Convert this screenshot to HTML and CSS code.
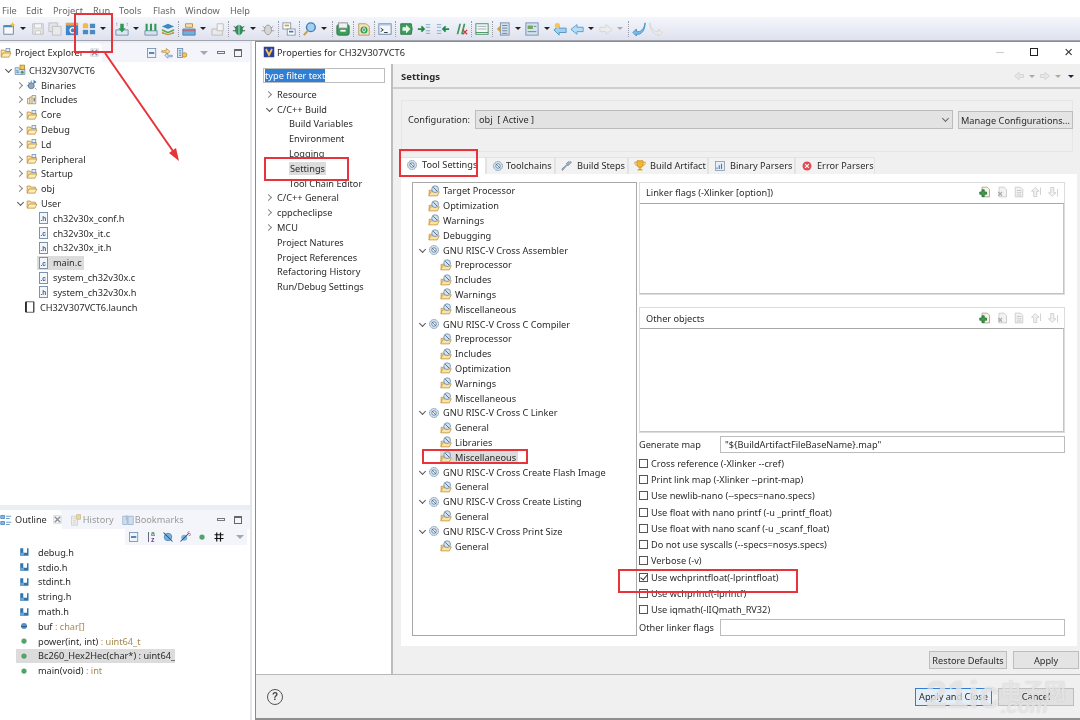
FILE: index.html
```html
<!DOCTYPE html>
<html lang="en">
<head>
    <meta charset="UTF-8">
    <title>Properties for CH32V307VCT6</title>
    <link rel="stylesheet" href="styles.css">
</head>
<body>

<svg class="defs" width="0" height="0">
    <symbol id="i-srcfolder" viewBox="0 0 16 16"><path d="M1.5 13V4h4l1 1.5h7V8" fill="#f6dfa0" stroke="#b98a35"/><path d="M1.5 13.5 4 8h10.5L12 13.5z" fill="#fdeeb8" stroke="#b98a35"/><rect x="8" y="2" width="5" height="4" fill="#e8eef5" stroke="#6d8db0"/></symbol>
    <symbol id="i-folder" viewBox="0 0 16 16"><path d="M1.5 13V4h4l1 1.5h6V8" fill="#f6dfa0" stroke="#b98a35"/><path d="M1.5 13.5 4 8h10.5L12 13.5z" fill="#fdeeb8" stroke="#b98a35"/></symbol>
    <symbol id="i-project" viewBox="0 0 16 16"><path d="M1.5 14V5h5l1 1.5h7V14z" fill="#cfe0ef" stroke="#6d8db0"/><rect x="8" y="1.5" width="6" height="6" fill="#f4c64e" stroke="#a8802a"/><path d="M3 11h4M3 9h3" stroke="#2f6fae"/><circle cx="11" cy="11" r="2" fill="#4d9a4d"/></symbol>
    <symbol id="i-binaries" viewBox="0 0 16 16"><circle cx="7" cy="9" r="4" fill="#8fa9c4" stroke="#54708e"/><path d="M7 2v3M1 9h3M3 4l2 2M12 12l2 2" stroke="#54708e"/><path d="M10 1l4 3-4 3z" fill="#3d7fb9"/></symbol>
    <symbol id="i-includes" viewBox="0 0 16 16"><path d="M2 13V6h3V4h3V2h5v11z" fill="#f6ebcf" stroke="#a78a4e"/><path d="M5 6v7M8 4v9" stroke="#a78a4e"/><rect x="10" y="5" width="2" height="5" fill="#6d8db0"/></symbol>
    <symbol id="i-launch" viewBox="0 0 16 16"><path d="M3 1h10v14H3z" fill="#fff" stroke="#333"/><path d="M2.5 1v14" stroke="#111" stroke-width="2"/><path d="M13 1v14" stroke="#444" stroke-width="1.5"/></symbol>
    <symbol id="i-toolfolder" viewBox="0 0 16 16"><path d="M1.5 14V7h4l1-1" fill="#f6dfa0" stroke="#b98a35"/><path d="M1 14.5 3.5 9H15l-2.5 5.5z" fill="#fde3a0" stroke="#c08f3a"/><circle cx="9.5" cy="5.5" r="4.5" fill="#d5e2ee" stroke="#5f84a8"/><path d="M7 3l5 5" stroke="#44668a" stroke-width="1.2"/></symbol>
    <symbol id="i-tool" viewBox="0 0 16 16"><circle cx="8" cy="8" r="6" fill="#d5e2ee" stroke="#5f84a8" stroke-dasharray="2 .6"/><circle cx="8" cy="8" r="3" fill="#f2f6fa" stroke="#54708e"/><path d="M5 5l6 6" stroke="#44668a"/></symbol>
    <symbol id="i-include" viewBox="0 0 16 16"><path d="M3 3h4v6h5V3h2v10H3z" fill="#2f74ad"/><path d="M3 9h5v4H3z" fill="#6ea3cf"/></symbol>
    <symbol id="i-fn" viewBox="0 0 16 16"><circle cx="8" cy="8" r="3.5" fill="#4fa36c"/></symbol>
    <symbol id="i-var" viewBox="0 0 16 16"><circle cx="8" cy="8" r="4" fill="#5b8fc4"/><path d="M4 8h8v1.5H4z" fill="#2c5f96"/></symbol>
    <symbol id="i-x" viewBox="0 0 10 10"><path d="M2 2l6 6M8 2 2 8" stroke="#8a8f98" stroke-width="1.6" fill="none"/><rect x="1" y="1" width="8" height="8" fill="none" stroke="#c9cdd4"/></symbol>
    <symbol id="i-outline" viewBox="0 0 16 16"><path d="M1 2h5v4H1zM1 10h5v4H1z" fill="#8fb8da" stroke="#3d7fb9"/><path d="M8 3h7M8 6h5M8 11h7M8 14h5" stroke="#3d7fb9"/></symbol>
    <symbol id="i-history" viewBox="0 0 16 16"><path d="M2 3h8v12H2z" fill="#eee" stroke="#c8c8c8"/><path d="M4 6h4M4 9h4M4 12h4" stroke="#ccc"/><rect x="9" y="1" width="5" height="6" fill="#ecd9a0" stroke="#cdb77f"/></symbol>
    <symbol id="i-bookmarks" viewBox="0 0 16 16"><path d="M1 3h6v11H1zM8 3h7v11H8z" fill="#cfdeed" stroke="#93aec8"/><path d="M5 2h3v7L6.500 7.500 5 9z" fill="#a8c0d8"/></symbol>
    <symbol id="i-collapse" viewBox="0 0 16 16"><rect x="2" y="2" width="11" height="12" fill="#eef3f9" stroke="#5f84a8"/><path d="M4 8h7" stroke="#2f5f96" stroke-width="2"/></symbol>
    <symbol id="i-sync" viewBox="0 0 16 16"><path d="M1 5h6V2l5 4-5 4V7H1z" fill="#f6dfa0" stroke="#b98a35"/><path d="M15 11H9V8l-4 3 4 4v-2h6z" fill="#dbe7f2" stroke="#6d8db0"/></symbol>
    <symbol id="i-filter" viewBox="0 0 16 16"><rect x="2" y="2" width="7" height="12" fill="#d5e4f2" stroke="#5f84a8"/><path d="M4 5h3M4 8h3M4 11h3" stroke="#2f6fae"/><circle cx="11.5" cy="10.5" r="3" fill="#f4c64e" stroke="#b98a35"/></symbol>
    <symbol id="i-hidefields" viewBox="0 0 16 16"><circle cx="8" cy="8" r="5" fill="#7db0d9" stroke="#3d7fb9"/><path d="M2 2l12 12" stroke="#24507f" stroke-width="1.4"/></symbol>
    <symbol id="i-hidestatic" viewBox="0 0 16 16"><circle cx="7" cy="9" r="4" fill="#7db0d9"/><path d="M2 14 13 3" stroke="#24507f" stroke-width="1.4"/><path d="M14 1c-3-.5-3 2.500 0 2.500s2 3-1 2.500" stroke="#c2456a" fill="none"/></symbol>
    <symbol id="i-hash" viewBox="0 0 16 16"><path d="M5 2v12M10 2v12M2 5h12M2 10h12" stroke="#111" stroke-width="1.6"/></symbol>
    <symbol id="i-back" viewBox="0 0 16 16"><path d="M2 8l6-5v3h6v4H8v3z" fill="#e6e6e6" stroke="#cfcfcf"/></symbol>
    <symbol id="i-fwd" viewBox="0 0 16 16"><path d="M14 8 8 3v3H2v4h6v3z" fill="#e6e6e6" stroke="#cfcfcf"/></symbol>
    <symbol id="i-addrow" viewBox="0 0 16 16"><path d="M4 1.5h7l3 3v10H4z" fill="#f6f3e2" stroke="#9a9a80"/><path d="M1 8h3V5h3v3h3v3H7v3H4v-3H1z" fill="#3f9c50" stroke="#246b33"/></symbol>
    <symbol id="i-delrow" viewBox="0 0 16 16"><path d="M4 1.5h7l3 3v10H4z" fill="#f2f2f2" stroke="#c4c4c4"/><path d="M3 8l5 5M8 8l-5 5" stroke="#aaa" stroke-width="1.5"/></symbol>
    <symbol id="i-editrow" viewBox="0 0 16 16"><path d="M3 1.5h7l3 3v10H3z" fill="#f2f2f2" stroke="#c4c4c4"/><path d="M5 6h6M5 9h6M5 12h6" stroke="#bbb"/></symbol>
    <symbol id="i-uprow" viewBox="0 0 16 16"><path d="M7 2 2 7h3v7h4V7h3z" fill="#f2f2f2" stroke="#c4c4c4"/><path d="M14 2v10" stroke="#c4c4c4"/></symbol>
    <symbol id="i-downrow" viewBox="0 0 16 16"><path d="M7 14 2 9h3V2h4v7h3z" fill="#f2f2f2" stroke="#c4c4c4"/><path d="M14 4v10" stroke="#c4c4c4"/></symbol>
    <symbol id="i-wrench" viewBox="0 0 16 16"><path d="M2 14 8 7l1 1 5-5-1-1-2 1-1-1-3 3 1 1-7 6z" fill="#9fb0c0" stroke="#7a8a9a"/></symbol>
    <symbol id="i-trophy" viewBox="0 0 16 16"><path d="M4 1h8v5c0 3-2 4-4 4s-4-1-4-4z" fill="#f2b632" stroke="#c68a1a"/><path d="M4 3H1c0 3 1 4 3 4M12 3h3c0 3-1 4-3 4" fill="none" stroke="#c68a1a"/><path d="M7 10h2v2h2v2H5v-2h2z" fill="#e0a020"/></symbol>
    <symbol id="i-binparser" viewBox="0 0 16 16"><rect x="2" y="2" width="12" height="12" fill="#e8eef5" stroke="#7d93ab"/><path d="M4 10v2M7 7v5M10 5v7" stroke="#3d7fb9" stroke-width="1.5"/></symbol>
    <symbol id="i-error" viewBox="0 0 16 16"><circle cx="8" cy="8" r="6" fill="#e24a55"/><path d="M5.500 5.500l5 5M10.500 5.500l-5 5" stroke="#fff" stroke-width="1.6"/></symbol>
    <symbol id="i-wch" viewBox="0 0 16 16"><path d="M1 1h14v14H1z" fill="#2b3f9c"/><path d="M4 4l4 8 4-8" stroke="#f4c64e" stroke-width="2.4" fill="none"/></symbol>
    <symbol id="t-new" viewBox="0 0 16 16"><path d="M2 4h11v10H2z" fill="#f6f8fb" stroke="#6a7c8f"/><path d="M2 4h11v2H2z" fill="#4a8ac0"/><path d="M12 0l1 2 2 1-2 1-1 2-1-2-2-1 2-1z" fill="#eec24a"/></symbol>
    <symbol id="t-save" viewBox="0 0 16 16"><path d="M2 2h12v12H2z" fill="#e3e4e6" stroke="#bcbdc0"/><path d="M4 2h8v5H4zM5 10h6v4H5z" fill="#f5f5f5" stroke="#c8c8c8"/></symbol>
    <symbol id="t-saveall" viewBox="0 0 16 16"><path d="M1 1h10v10H1z" fill="#e3e4e6" stroke="#bcbdc0"/><path d="M5 5h10v10H5z" fill="#e9e9ea" stroke="#bcbdc0"/></symbol>
    <symbol id="t-cproj" viewBox="0 0 16 16"><path d="M1 1h14v14H1z" fill="#3a86c8"/><path d="M1 1h14v3H1z" fill="#f0a040"/><path d="M11 7.500a3 3 0 1 0 0 4" stroke="#fff" stroke-width="1.5" fill="none"/></symbol>
    <symbol id="t-grid" viewBox="0 0 16 16"><rect x="1" y="2" width="6" height="5" fill="#f0a93a"/><rect x="9" y="2" width="6" height="5" fill="#4a8ac0"/><rect x="1" y="9" width="6" height="5" fill="#4a8ac0"/><rect x="9" y="9" width="6" height="5" fill="#4a8ac0"/><circle cx="4" cy="4" r="3" fill="#f4bb4a"/></symbol>
    <symbol id="t-build" viewBox="0 0 16 16"><path d="M1 9h14v6H1z" fill="#dbe7f2" stroke="#6d8db0"/><path d="M6 2h4v5h2l-4 5-4-5h2z" fill="#2f9a55"/><path d="M2 1v3M14 1v3" stroke="#777" stroke-dasharray="1 1"/></symbol>
    <symbol id="t-dots" viewBox="0 0 16 16"><path d="M1 10h14v5H1z" fill="#d5e2ee" stroke="#6d8db0"/><path d="M3 2v8M8 2v8M13 2v8" stroke="#2f9a55" stroke-width="2.4"/></symbol>
    <symbol id="t-books" viewBox="0 0 16 16"><path d="M1 5l7-3 7 3-7 3z" fill="#3a8ac0"/><path d="M1 8l7 3 7-3v2l-7 3-7-3z" fill="#5aa84f"/><path d="M1 11l7 3 7-3v2l-7 2-7-2z" fill="#c88a30"/></symbol>
    <symbol id="t-tray" viewBox="0 0 16 16"><path d="M1 8h14v7H1z" fill="#6fb0dd" stroke="#3d7fb9"/><path d="M4 6h8V2H4z" fill="#f4e2b0" stroke="#b98a35"/><path d="M1 10h14" stroke="#e05050"/></symbol>
    <symbol id="t-graybox" viewBox="0 0 16 16"><path d="M1 8h12v7H1z" fill="#e9e9e9" stroke="#b8b8b8"/><path d="M7 2h7v8H7z" fill="#f3f3f3" stroke="#bbb"/></symbol>
    <symbol id="t-bug" viewBox="0 0 16 16"><ellipse cx="8" cy="9" rx="4.5" ry="6" fill="#2f8f5a"/><path d="M8 3v12" stroke="#d8efd8"/><path d="M2 5l3 2M14 5l-3 2M1 10h3M15 10h-3" stroke="#444"/></symbol>
    <symbol id="t-graybug" viewBox="0 0 16 16"><ellipse cx="8" cy="9" rx="4" ry="5.5" fill="#d6d6d6" stroke="#999"/><path d="M2 5l3 2M14 5l-3 2M1 10h3M15 10h-3" stroke="#999"/></symbol>
    <symbol id="t-link" viewBox="0 0 16 16"><rect x="1" y="1" width="9" height="7" fill="#fff" stroke="#7d93ab"/><rect x="6" y="8" width="9" height="7" fill="#fff" stroke="#7d93ab"/><path d="M3 4h5" stroke="#e0a020" stroke-width="2"/><path d="M8 11h5" stroke="#3d7fb9" stroke-width="2"/></symbol>
    <symbol id="t-search" viewBox="0 0 16 16"><circle cx="9" cy="6" r="5" fill="#a5d0ee" stroke="#3d7fb9" stroke-width="1.6"/><path d="M5.500 10 1 15" stroke="#d0a040" stroke-width="2.4"/></symbol>
    <symbol id="t-jar" viewBox="0 0 16 16"><rect x="1" y="3" width="14" height="12" rx="2" fill="#3da05a" stroke="#247040"/><rect x="3" y="1" width="10" height="6" fill="#eef3ee" stroke="#888"/><path d="M5 10h6" stroke="#fff" stroke-width="2"/></symbol>
    <symbol id="t-file" viewBox="0 0 16 16"><path d="M2 2h8l4 3v10H2z" fill="#f5e4b4" stroke="#b09560"/><circle cx="8" cy="9" r="4" fill="#2f9a55"/><ellipse cx="8" cy="9" rx="1.5" ry="2.500" fill="none" stroke="#fff"/></symbol>
    <symbol id="t-term" viewBox="0 0 16 16"><rect x="1" y="2" width="14" height="12" fill="#f3f7fb" stroke="#5f84a8"/><path d="M1 2h14v2H1z" fill="#a9c5df"/><path d="M3 7l3 2-3 2M7 12h4" stroke="#222" fill="none"/></symbol>
    <symbol id="t-go" viewBox="0 0 16 16"><path d="M2 2h12l1 6-1 6H2z" fill="#3da05a" stroke="#247040"/><path d="M4 6h4V3l5 5-5 5v-3H4z" fill="#e9f6e9"/></symbol>
    <symbol id="t-goin" viewBox="0 0 16 16"><path d="M1 8h7M5 5l3 3-3 3" stroke="#1f8a45" stroke-width="2" fill="none"/><path d="M10 3h5M10 6h5M10 10h5M10 13h5" stroke="#7da6c8"/></symbol>
    <symbol id="t-goout" viewBox="0 0 16 16"><path d="M15 8H8M11 5 8 8l3 3" stroke="#1f8a45" stroke-width="2" fill="none"/><path d="M1 3h5M1 6h5M1 10h5M1 13h5" stroke="#7da6c8"/></symbol>
    <symbol id="t-bars" viewBox="0 0 16 16"><path d="M3 14 6 2h2L5 14zM8 14l3-12h2l-3 12z" fill="#3a9a60"/><path d="M10 9l5 5M15 9l-5 5" stroke="#d83a3a" stroke-width="1.6"/></symbol>
    <symbol id="t-window" viewBox="0 0 16 16"><rect x="1" y="2" width="14" height="12" fill="#f5f7f5" stroke="#3d8a5a"/><path d="M3 5h10M3 8h10" stroke="#9ab"/><path d="M1 12h14" stroke="#3d8a5a"/></symbol>
    <symbol id="t-list" viewBox="0 0 16 16"><rect x="5" y="1" width="10" height="14" fill="#d5e2ee" stroke="#6d8db0"/><path d="M7 4h6M7 7h6M7 10h6M7 13h6" stroke="#5f7b98"/><path d="M1 8l4-4v8z" fill="#e0a030"/></symbol>
    <symbol id="t-note" viewBox="0 0 16 16"><rect x="1" y="1" width="14" height="14" fill="#d5e2ee" stroke="#6d8db0"/><path d="M3 4h6v4H3z" fill="#6fa860"/><path d="M3 11h10M10 5h3" stroke="#5f7b98"/></symbol>
    <symbol id="t-yback" viewBox="0 0 16 16"><path d="M7 4v3h8v5H7v3L1 9z" fill="#9fd0f0" stroke="#4d8fc0"/><circle cx="5" cy="4" r="3" fill="#f4c64e"/></symbol>
    <symbol id="t-bback" viewBox="0 0 16 16"><path d="M8 3v3h7v5H8v3L1 8.5z" fill="#b9dcf4" stroke="#4d9ad0"/></symbol>
    <symbol id="t-gfwd" viewBox="0 0 16 16"><path d="M8 3v3H1v5h7v3l7-5.5z" fill="#ececec" stroke="#d5d5d5"/></symbol>
    <symbol id="t-undo" viewBox="0 0 16 16"><path d="M15 1C14 8 10 12 5 11V8l-4 4 4 4v-2c6 1 10-5 10-13z" fill="#7cbce8" stroke="#3d8fc8"/></symbol>
    <symbol id="t-redo" viewBox="0 0 16 16"><path d="M1 1c1 7 5 11 10 10V8l4 4-4 4v-2C5 15 1 9 1 1z" fill="#ececec" stroke="#d5d5d5"/></symbol>
</svg>

<div class="screen">

    <!-- Eclipse menu -->
    <nav class="menubar">
        <span>File</span>
        <span>Edit</span>
        <span>Project</span>
        <span>Run</span>
        <span>Tools</span>
        <span>Flash</span>
        <span>Window</span>
        <span>Help</span>
    </nav>

    <div class="toolbar">
        <svg class="tb"><use href="#t-new"/></svg><i class="caret"></i>
        <svg class="tb"><use href="#t-save"/></svg>
        <svg class="tb"><use href="#t-saveall"/></svg>
        <svg class="tb"><use href="#t-cproj"/></svg>
        <svg class="tb"><use href="#t-grid"/></svg><i class="caret"></i>
        <i class="tb-sep"></i>
        <svg class="tb"><use href="#t-build"/></svg><i class="caret"></i>
        <svg class="tb"><use href="#t-dots"/></svg>
        <svg class="tb"><use href="#t-books"/></svg>
        <i class="tb-sep"></i>
        <svg class="tb"><use href="#t-tray"/></svg><i class="caret"></i>
        <svg class="tb"><use href="#t-graybox"/></svg>
        <i class="tb-sep"></i>
        <svg class="tb"><use href="#t-bug"/></svg><i class="caret"></i>
        <svg class="tb"><use href="#t-graybug"/></svg>
        <i class="tb-sep"></i>
        <svg class="tb"><use href="#t-link"/></svg>
        <i class="tb-sep"></i>
        <svg class="tb"><use href="#t-search"/></svg><i class="caret"></i>
        <i class="tb-sep"></i>
        <svg class="tb"><use href="#t-jar"/></svg>
        <i class="tb-sep"></i>
        <svg class="tb"><use href="#t-file"/></svg>
        <i class="tb-sep"></i>
        <svg class="tb"><use href="#t-term"/></svg>
        <i class="tb-sep"></i>
        <svg class="tb"><use href="#t-go"/></svg>
        <svg class="tb wide"><use href="#t-goin"/></svg>
        <svg class="tb wide"><use href="#t-goout"/></svg>
        <svg class="tb wide"><use href="#t-bars"/></svg>
        <i class="tb-sep"></i>
        <svg class="tb"><use href="#t-window"/></svg>
        <i class="tb-sep"></i>
        <svg class="tb"><use href="#t-list"/></svg><i class="caret"></i>
        <svg class="tb"><use href="#t-note"/></svg><i class="caret"></i>
        <svg class="tb tight"><use href="#t-yback"/></svg>
        <svg class="tb"><use href="#t-bback"/></svg><i class="caret"></i>
        <svg class="tb"><use href="#t-gfwd"/></svg><i class="caret light"></i>
        <i class="tb-sep"></i>
        <svg class="tb"><use href="#t-undo"/></svg>
        <svg class="tb"><use href="#t-redo"/></svg>
    </div>

    <div class="workbench">

        <section class="view explorer">
            <header class="view-head">
                <div class="view-tab">
                    <svg class="ico"><use href="#i-srcfolder"/></svg>
                    <span>Project Explorer</span>
                    <svg class="close-x"><use href="#i-x"/></svg>
                </div>
                <div class="view-tools">
                    <svg class="ico"><use href="#i-collapse"/></svg>
                    <svg class="ico"><use href="#i-sync"/></svg>
                    <svg class="ico"><use href="#i-filter"/></svg>
                    <i class="view-menu"></i>
                    <i class="win-min"></i>
                    <i class="win-max"></i>
                </div>
            </header>
            <div class="tree explorer-tree">
                <div class="row lv0"><i class="tw open"></i><svg class="ico"><use href="#i-project"/></svg><span>CH32V307VCT6</span></div>
                <div class="row lv1"><i class="tw"></i><svg class="ico"><use href="#i-binaries"/></svg><span>Binaries</span></div>
                <div class="row lv1"><i class="tw"></i><svg class="ico"><use href="#i-includes"/></svg><span>Includes</span></div>
                <div class="row lv1"><i class="tw"></i><svg class="ico"><use href="#i-srcfolder"/></svg><span>Core</span></div>
                <div class="row lv1"><i class="tw"></i><svg class="ico"><use href="#i-srcfolder"/></svg><span>Debug</span></div>
                <div class="row lv1"><i class="tw"></i><svg class="ico"><use href="#i-srcfolder"/></svg><span>Ld</span></div>
                <div class="row lv1"><i class="tw"></i><svg class="ico"><use href="#i-srcfolder"/></svg><span>Peripheral</span></div>
                <div class="row lv1"><i class="tw"></i><svg class="ico"><use href="#i-srcfolder"/></svg><span>Startup</span></div>
                <div class="row lv1"><i class="tw"></i><svg class="ico"><use href="#i-folder"/></svg><span>obj</span></div>
                <div class="row lv1"><i class="tw open"></i><svg class="ico"><use href="#i-folder"/></svg><span>User</span></div>
                <div class="row lv2"><i class="ico fileico is-h"></i><span>ch32v30x_conf.h</span></div>
                <div class="row lv2"><i class="ico fileico is-c"></i><span>ch32v30x_it.c</span></div>
                <div class="row lv2"><i class="ico fileico is-h"></i><span>ch32v30x_it.h</span></div>
                <div class="row lv2"><span class="sel"><i class="ico fileico is-c"></i><span>main.c</span></span></div>
                <div class="row lv2"><i class="ico fileico is-c"></i><span>system_ch32v30x.c</span></div>
                <div class="row lv2"><i class="ico fileico is-h"></i><span>system_ch32v30x.h</span></div>
                <div class="row lv-launch"><svg class="ico"><use href="#i-launch"/></svg><span>CH32V307VCT6.launch</span></div>
            </div>
        </section>

        <section class="view outline">
            <header class="view-head">
                <div class="view-tab">
                    <svg class="ico"><use href="#i-outline"/></svg>
                    <span>Outline</span>
                    <svg class="close-x"><use href="#i-x"/></svg>
                </div>
                <span class="tab-off"><svg class="ico"><use href="#i-history"/></svg>History</span>
                <span class="tab-off"><svg class="ico"><use href="#i-bookmarks"/></svg>Bookmarks</span>
                <div class="view-tools">
                    <i class="win-min"></i>
                    <i class="win-max"></i>
                </div>
            </header>
            <div class="outline-tools">
                <svg class="ico"><use href="#i-collapse"/></svg>
                <i class="ico sort-ico"></i>
                <svg class="ico"><use href="#i-hidefields"/></svg>
                <svg class="ico"><use href="#i-hidestatic"/></svg>
                <svg class="ico"><use href="#i-fn"/></svg>
                <svg class="ico"><use href="#i-hash"/></svg>
                <i class="view-menu"></i>
            </div>
            <div class="tree outline-tree">
                <div class="row"><svg class="ico"><use href="#i-include"/></svg><span>debug.h</span></div>
                <div class="row"><svg class="ico"><use href="#i-include"/></svg><span>stdio.h</span></div>
                <div class="row"><svg class="ico"><use href="#i-include"/></svg><span>stdint.h</span></div>
                <div class="row"><svg class="ico"><use href="#i-include"/></svg><span>string.h</span></div>
                <div class="row"><svg class="ico"><use href="#i-include"/></svg><span>math.h</span></div>
                <div class="row"><svg class="ico"><use href="#i-var"/></svg><span>buf <em>: char[]</em></span></div>
                <div class="row"><svg class="ico"><use href="#i-fn"/></svg><span>power(int, int) <em>: uint64_t</em></span></div>
                <div class="row"><span class="sel outline-sel"><svg class="ico"><use href="#i-fn"/></svg><span>Bc260_Hex2Hec(char*) : uint64_t</span></span></div>
                <div class="row"><svg class="ico"><use href="#i-fn"/></svg><span>main(void) <em>: int</em></span></div>
            </div>
        </section>
    </div>

    <!-- Properties dialog, floats over the workbench -->
    <div class="dialog">
        <div class="dlg-title">
            <svg class="ico wch"><use href="#i-wch"/></svg>
            <span class="dlg-name">Properties for CH32V307VCT6</span>
            <i class="ctl-min"></i>
            <i class="ctl-max"></i>
            <span class="ctl-close">&times;</span>
        </div>

        <div class="dlg-main">
            <aside class="nav">
                <div class="filter"><span class="filter-sel">type filter text</span></div>
                <div class="tree nav-tree">
                    <div class="row nav0"><i class="tw"></i><span>Resource</span></div>
                    <div class="row nav0"><i class="tw open"></i><span>C/C++ Build</span></div>
                    <div class="row nav1"><span>Build Variables</span></div>
                    <div class="row nav1"><span>Environment</span></div>
                    <div class="row nav1"><span>Logging</span></div>
                    <div class="row nav1"><span class="sel">Settings</span></div>
                    <div class="row nav1"><span>Tool Chain Editor</span></div>
                    <div class="row nav0"><i class="tw"></i><span>C/C++ General</span></div>
                    <div class="row nav0"><i class="tw"></i><span>cppcheclipse</span></div>
                    <div class="row nav0"><i class="tw"></i><span>MCU</span></div>
                    <div class="row nav0"><i class="tw blank"></i><span>Project Natures</span></div>
                    <div class="row nav0"><i class="tw blank"></i><span>Project References</span></div>
                    <div class="row nav0"><i class="tw blank"></i><span>Refactoring History</span></div>
                    <div class="row nav0"><i class="tw blank"></i><span>Run/Debug Settings</span></div>
                </div>
            </aside>

            <main class="page">
                <div class="page-head">
                    <b>Settings</b>
                    <div class="page-arrows">
                        <svg class="ico"><use href="#i-back"/></svg><i class="caret light"></i>
                        <svg class="ico"><use href="#i-fwd"/></svg><i class="caret light"></i>
                        <i class="caret dark"></i>
                    </div>
                </div>

                <div class="config">
                    <span class="config-label">Configuration:</span>
                    <div class="combo"><span>obj&nbsp; [ Active ]</span><i class="combo-arrow"></i></div>
                    <div class="btn manage">Manage Configurations...</div>
                </div>

                <div class="tabs">
                    <div class="tab active"><svg class="ico"><use href="#i-tool"/></svg>Tool Settings</div>
                    <div class="tab t-chains"><svg class="ico"><use href="#i-tool"/></svg>Toolchains</div>
                    <div class="tab t-steps"><svg class="ico"><use href="#i-wrench"/></svg>Build Steps</div>
                    <div class="tab t-artifact"><svg class="ico"><use href="#i-trophy"/></svg>Build Artifact</div>
                    <div class="tab t-binary"><svg class="ico"><use href="#i-binparser"/></svg>Binary Parsers</div>
                    <div class="tab t-error"><svg class="ico"><use href="#i-error"/></svg>Error Parsers</div>
                </div>

                <div class="tab-body">
                    <div class="tree tool-tree">
                        <div class="row tl1"><svg class="ico"><use href="#i-toolfolder"/></svg><span>Target Processor</span></div>
                        <div class="row tl1"><svg class="ico"><use href="#i-toolfolder"/></svg><span>Optimization</span></div>
                        <div class="row tl1"><svg class="ico"><use href="#i-toolfolder"/></svg><span>Warnings</span></div>
                        <div class="row tl1"><svg class="ico"><use href="#i-toolfolder"/></svg><span>Debugging</span></div>
                        <div class="row tl0"><i class="tw open"></i><svg class="ico"><use href="#i-tool"/></svg><span>GNU RISC-V Cross Assembler</span></div>
                        <div class="row tl2"><svg class="ico"><use href="#i-toolfolder"/></svg><span>Preprocessor</span></div>
                        <div class="row tl2"><svg class="ico"><use href="#i-toolfolder"/></svg><span>Includes</span></div>
                        <div class="row tl2"><svg class="ico"><use href="#i-toolfolder"/></svg><span>Warnings</span></div>
                        <div class="row tl2"><svg class="ico"><use href="#i-toolfolder"/></svg><span>Miscellaneous</span></div>
                        <div class="row tl0"><i class="tw open"></i><svg class="ico"><use href="#i-tool"/></svg><span>GNU RISC-V Cross C Compiler</span></div>
                        <div class="row tl2"><svg class="ico"><use href="#i-toolfolder"/></svg><span>Preprocessor</span></div>
                        <div class="row tl2"><svg class="ico"><use href="#i-toolfolder"/></svg><span>Includes</span></div>
                        <div class="row tl2"><svg class="ico"><use href="#i-toolfolder"/></svg><span>Optimization</span></div>
                        <div class="row tl2"><svg class="ico"><use href="#i-toolfolder"/></svg><span>Warnings</span></div>
                        <div class="row tl2"><svg class="ico"><use href="#i-toolfolder"/></svg><span>Miscellaneous</span></div>
                        <div class="row tl0"><i class="tw open"></i><svg class="ico"><use href="#i-tool"/></svg><span>GNU RISC-V Cross C Linker</span></div>
                        <div class="row tl2"><svg class="ico"><use href="#i-toolfolder"/></svg><span>General</span></div>
                        <div class="row tl2"><svg class="ico"><use href="#i-toolfolder"/></svg><span>Libraries</span></div>
                        <div class="row tl2"><span class="sel"><svg class="ico"><use href="#i-toolfolder"/></svg><span>Miscellaneous</span></span></div>
                        <div class="row tl0"><i class="tw open"></i><svg class="ico"><use href="#i-tool"/></svg><span>GNU RISC-V Cross Create Flash Image</span></div>
                        <div class="row tl2"><svg class="ico"><use href="#i-toolfolder"/></svg><span>General</span></div>
                        <div class="row tl0"><i class="tw open"></i><svg class="ico"><use href="#i-tool"/></svg><span>GNU RISC-V Cross Create Listing</span></div>
                        <div class="row tl2"><svg class="ico"><use href="#i-toolfolder"/></svg><span>General</span></div>
                        <div class="row tl0"><i class="tw open"></i><svg class="ico"><use href="#i-tool"/></svg><span>GNU RISC-V Cross Print Size</span></div>
                        <div class="row tl2"><svg class="ico"><use href="#i-toolfolder"/></svg><span>General</span></div>
                    </div>

                    <div class="options">
                        <div class="listbox linker-flags">
                            <div class="list-head">
                                <span>Linker flags (-Xlinker [option])</span>
                                <div class="list-tools">
                                    <svg class="ico"><use href="#i-addrow"/></svg>
                                    <svg class="ico"><use href="#i-delrow"/></svg>
                                    <svg class="ico"><use href="#i-editrow"/></svg>
                                    <svg class="ico"><use href="#i-uprow"/></svg>
                                    <svg class="ico"><use href="#i-downrow"/></svg>
                                </div>
                            </div>
                            <div class="list-body"></div>
                        </div>
                        <div class="listbox other-objects">
                            <div class="list-head">
                                <span>Other objects</span>
                                <div class="list-tools">
                                    <svg class="ico"><use href="#i-addrow"/></svg>
                                    <svg class="ico"><use href="#i-delrow"/></svg>
                                    <svg class="ico"><use href="#i-editrow"/></svg>
                                    <svg class="ico"><use href="#i-uprow"/></svg>
                                    <svg class="ico"><use href="#i-downrow"/></svg>
                                </div>
                            </div>
                            <div class="list-body"></div>
                        </div>

                        <div class="field map-field">
                            <label>Generate map</label>
                            <div class="input">"${BuildArtifactFileBaseName}.map"</div>
                        </div>

                        <div class="checks">
                            <div class="check"><i class="box"></i>Cross reference (-Xlinker --cref)</div>
                            <div class="check"><i class="box"></i>Print link map (-Xlinker --print-map)</div>
                            <div class="check"><i class="box"></i>Use newlib-nano (--specs=nano.specs)</div>
                            <div class="check"><i class="box"></i>Use float with nano printf (-u _printf_float)</div>
                            <div class="check"><i class="box"></i>Use float with nano scanf (-u _scanf_float)</div>
                            <div class="check"><i class="box"></i>Do not use syscalls (--specs=nosys.specs)</div>
                            <div class="check"><i class="box"></i>Verbose (-v)</div>
                            <div class="check"><i class="box on"></i>Use wchprintfloat(-lprintfloat)</div>
                            <div class="check"><i class="box"></i>Use wchprintf(-lprintf)</div>
                            <div class="check"><i class="box"></i>Use iqmath(-lIQmath_RV32)</div>
                        </div>

                        <div class="field flags-field">
                            <label>Other linker flags</label>
                            <div class="input"></div>
                        </div>
                    </div>
                </div>

                <div class="page-buttons">
                    <div class="btn restore">Restore Defaults</div>
                    <div class="btn apply">Apply</div>
                </div>
            </main>
        </div>

        <div class="dlg-foot">
            <span class="help">?</span>
            <div class="btn primary">Apply and Close</div>
            <div class="btn cancel">Cancel</div>
        </div>
    </div>

    <!-- red annotations drawn on top of the screenshot -->
    <i class="mark mark-toolbar"></i>
    <i class="mark mark-settings"></i>
    <i class="mark mark-tab"></i>
    <i class="mark mark-misc"></i>
    <i class="mark mark-check"></i>
    <svg class="arrow" width="200" height="180" viewBox="0 0 200 180">
        <path d="M105 53 175 154" stroke="#e8333a" stroke-width="2" fill="none"/>
        <path d="M179 161 169 153 176 148z" fill="#e8333a"/>
    </svg>

    <div class="watermark">
        <span class="wm-21">21ic</span>
        <span class="wm-cn">电子网</span>
        <span class="wm-com">.com</span>
    </div>
</div>

</body>
</html>
```

FILE: styles.css
```css
* {
    box-sizing: border-box;
}
body {
    margin: 0;
    background-color: #fff;
    color: #2b2b2b;
    font-family: "Noto Sans", "Noto Sans CJK SC", sans-serif;
    font-size: 9.2px;
    overflow: hidden;
}
i {
    font-style: normal;
}
.defs {
    position: absolute;
}
.screen {
    position: relative;
    width: 1080px;
    height: 720px;
    overflow: hidden;
    filter: blur(0.35px);
}

/* top of the workbench */
.menubar {
    display: flex;
    height: 17px;
    padding: 4px 0 0 2px;
    color: #666;
}
.menubar span:nth-child(1) { width: 24px; }
.menubar span:nth-child(2) { width: 27px; }
.menubar span:nth-child(3) { width: 40px; }
.menubar span:nth-child(4) { width: 26px; }
.menubar span:nth-child(5) { width: 34px; }
.menubar span:nth-child(6) { width: 32px; }
.menubar span:nth-child(7) { width: 45px; }
.toolbar {
    display: flex;
    align-items: center;
    height: 24px;
    background: linear-gradient(#f4f6fc, #dfe2ee);
    border-bottom: 1px solid #a2a4ad;
}
.tb {
    width: 14px;
    height: 14px;
    margin: 0 1.5px;
    flex: none;
}
.tb.wide {
    margin-left: 3px;
}
.tb.tight {
    margin-left: 0;
}
.caret {
    display: block;
    flex: none;
    width: 0;
    height: 0;
    margin: 0 3px;
    border-left: 3.5px solid transparent;
    border-right: 3.5px solid transparent;
    border-top: 3.5px solid #222;
}
.caret.light {
    border-top-color: #aaa;
}
.caret.dark {
    border-top-color: #2a1f4a;
}
.tb-sep {
    flex: none;
    width: 1px;
    height: 16px;
    margin: 0 1.5px;
    border-left: 1px dotted #9a9aa5;
}

/* left views */
.workbench {
    display: flex;
    flex-direction: column;
    width: 252px;
    height: 679px;
    background-color: #eceef5;
    border-right: 2px solid #e4e5ea;
}
.view {
    display: flex;
    flex-direction: column;
    background-color: #fff;
}
.explorer {
    height: 462px;
    margin-top: 2px;
}
.outline {
    height: 215px;
    margin-top: 5px;
    flex: 1;
}
.view-head {
    display: flex;
    align-items: center;
    height: 19px;
    background-color: #f3f5fa;
    flex: none;
}
.view-tab {
    display: flex;
    align-items: center;
    gap: 3px;
    height: 19px;
    padding: 0 3px 0 0;
    background-color: #fff;
    border-radius: 0 5px 0 0;
}
.outline .view-tab {
    padding-right: 0;
}
.close-x {
    width: 9px;
    height: 9px;
    margin-left: 3px;
}
.tab-off {
    display: flex;
    align-items: center;
    gap: 1px;
    color: #9a9a9a;
    margin-left: 8px;
}
.view-tools {
    display: flex;
    align-items: center;
    margin-left: auto;
    padding-right: 8px;
    gap: 3px;
}
.view-menu {
    display: block;
    margin: 0 6px 0 9px;
    width: 0;
    height: 0;
    border-left: 4px solid transparent;
    border-right: 4px solid transparent;
    border-top: 4px solid #a5a8b0;
}
.win-min {
    display: block;
    width: 8px;
    height: 3px;
    margin-right: 6px;
    border: 1px solid #777;
}
.win-max {
    display: block;
    width: 8px;
    height: 8px;
    border: 1px solid #666;
    border-top-width: 2px;
}
.ico {
    display: block;
    flex: none;
    width: 12px;
    height: 12px;
}
.fileico {
    position: relative;
    width: 9px;
    margin: 0 2px 0 2px;
    background-color: #f3f6fa;
    border: 1px solid #7d93ab;
}
.fileico::after {
    position: absolute;
    left: 0.5px;
    bottom: 0;
    font: bold 6.5px/8px "Liberation Sans", sans-serif;
    color: #3a5f88;
}
.fileico.is-h::after {
    content: ".h";
}
.fileico.is-c::after {
    content: ".c";
}
.sort-ico {
    position: relative;
    background: linear-gradient(#5f6b78, #5f6b78) 3px 1px / 1px 10px no-repeat;
}
.sort-ico::before,
.sort-ico::after {
    position: absolute;
    left: 6px;
    font: bold 7px/7px "Liberation Sans", sans-serif;
}
.sort-ico::before {
    content: "a";
    top: -1px;
    color: #4d8f4d;
}
.sort-ico::after {
    content: "z";
    top: 5px;
    color: #7a3fa0;
}

/* trees */
.row {
    display: flex;
    align-items: center;
    height: 14.8px;
    white-space: nowrap;
}
.row em {
    font-style: normal;
    color: #a58a50;
}
.sel {
    display: inline-flex;
    align-items: center;
    gap: inherit;
    background-color: #dcdcdc;
    height: 13.5px;
}
.tw {
    display: block;
    flex: none;
    width: 9px;
    height: 10px;
    margin-right: -1px;
    position: relative;
}
.tw::after {
    content: "";
    position: absolute;
    left: 2px;
    top: 2.5px;
    width: 4px;
    height: 4px;
    border-right: 1px solid #888;
    border-bottom: 1px solid #888;
    transform: rotate(-45deg);
}
.tw.open::after {
    left: 3px;
    top: 1.5px;
    border-color: #555;
    transform: rotate(45deg);
}
.tw.blank::after {
    display: none;
}
.explorer-tree {
    padding-top: 1px;
}
.explorer-tree .row {
    gap: 3px;
}
.explorer-tree .lv0 {
    padding-left: 3px;
}
.explorer-tree .lv1 {
    padding-left: 15px;
}
.explorer-tree .lv2 {
    padding-left: 37px;
}
.explorer-tree .lv2 .sel {
    padding-right: 2px;
}
.explorer-tree .lv-launch {
    padding-left: 24px;
    gap: 4px;
}
.outline-tools {
    display: flex;
    align-items: center;
    justify-content: flex-end;
    gap: 5px;
    height: 16px;
    width: 122px;
    margin-left: 125px;
    background-color: #f3f5fa;
    flex: none;
}
.outline-tools .view-menu {
    margin: 0 3px 0 6px;
}
.outline-tree {
    padding-top: 0;
}
.outline-tree .row {
    padding-left: 18px;
    gap: 8px;
}
.outline-tree .outline-sel {
    width: 159px;
    margin-left: -2px;
    padding-left: 2px;
    gap: 8px;
    overflow: hidden;
}

/* dialog window */
.dialog {
    position: absolute;
    left: 255px;
    top: 41px;
    width: 825px;
    height: 679px;
    display: flex;
    flex-direction: column;
    background-color: #f0f0f0;
    border-left: 1px solid #8b8b8b;
    border-top: 1px solid #8b8b8b;
    border-bottom: 2px solid #8f8f8f;
}
.dlg-title {
    display: flex;
    align-items: center;
    height: 22px;
    padding: 0 0 2px 7px;
    background-color: #fff;
    flex: none;
}
.dlg-name {
    margin-left: 2px;
}
.ctl-min {
    display: block;
    margin-left: auto;
    width: 8px;
    height: 1px;
    background-color: #ccc;
}
.ctl-max {
    display: block;
    width: 8px;
    height: 8px;
    margin-left: 26px;
    border: 1px solid #222;
}
.ctl-close {
    margin: 0 7px 0 26px;
    font: 15px/10px "Liberation Sans", sans-serif;
    color: #333;
}
.dlg-main {
    display: flex;
    height: 610px;
    flex: none;
}
.nav {
    width: 137px;
    background-color: #fff;
    border-right: 2px solid #bdbdbd;
    flex: none;
    padding-top: 4px;
}
.filter {
    width: 122px;
    height: 15px;
    margin-left: 7px;
    padding: 0 1px;
    border: 1px solid #bcbcbc;
    line-height: 13px;
    white-space: nowrap;
}
.filter-sel {
    display: inline-block;
    background-color: #2f7fd6;
    color: #fff;
    line-height: 13px;
}
.nav-tree {
    padding-top: 4px;
}
.nav-tree .tw {
    width: 13px;
    margin-right: 0;
}
.nav0 {
    padding-left: 8px;
}
.nav1 {
    padding-left: 33px;
}
.nav-tree .sel {
    padding: 0 1px;
}
.page {
    flex: 1;
    display: flex;
    flex-direction: column;
    min-width: 0;
}
.page-head {
    display: flex;
    align-items: center;
    height: 25px;
    padding: 1px 0 0 8px;
    border-bottom: 2px solid #cfcfcf;
    font-size: 9.5px;
    flex: none;
}
.page-arrows {
    display: flex;
    align-items: center;
    margin-left: auto;
    padding-right: 3px;
    gap: 1px;
}
.page-arrows .caret {
    margin: 0 3px;
    border-left-width: 3px;
    border-right-width: 3px;
    border-top-width: 3px;
}
.config {
    display: flex;
    align-items: flex-start;
    height: 52px;
    margin: 11px 7px 0 8px;
    padding: 9px 0 0 6px;
    border: 1px solid #e6e6e6;
    flex: none;
}
.config-label {
    margin-top: 3px;
    width: 67px;
    flex: none;
}
.combo {
    display: flex;
    align-items: center;
    width: 478px;
    height: 19px;
    padding-left: 3px;
    background-color: #e3e3e3;
    border: 1px solid #bcbcbc;
    flex: none;
}
.combo-arrow {
    display: block;
    width: 5px;
    height: 5px;
    margin: -3px 4px 0 auto;
    border-right: 1px solid #666;
    border-bottom: 1px solid #666;
    transform: rotate(45deg);
}
.btn {
    display: flex;
    align-items: center;
    justify-content: center;
    height: 18px;
    background-color: #e4e4e4;
    border: 1px solid #bdbdbd;
    white-space: nowrap;
}
.manage {
    width: 115px;
    margin: 1px 0 0 5px;
    flex: none;
}
.tabs {
    display: flex;
    align-items: flex-end;
    height: 17px;
    margin: 5px 0 0 7px;
    flex: none;
}
.tab {
    display: flex;
    align-items: center;
    gap: 4px;
    height: 17px;
    padding: 0 0 1px 5px;
    background-color: #f2f2f2;
    border: 1px solid #e3e3e3;
    border-bottom: none;
    flex: none;
    white-space: nowrap;
}
.tab.active {
    width: 86px;
    padding-bottom: 3px;
    background-color: #fff;
}
.t-chains { width: 69px; gap: 2px; }
.t-steps { width: 73px; }
.t-artifact { width: 80px; }
.t-binary { width: 87px; }
.t-error { width: 80px; }
.tab-body {
    display: flex;
    gap: 2px;
    width: 676px;
    height: 472px;
    margin-left: 8px;
    padding: 8px 12px 10px 11px;
    background-color: #fff;
    flex: none;
}
.tool-tree {
    width: 225px;
    height: 454px;
    padding-top: 0.5px;
    border: 1px solid #a8a8a8;
    flex: none;
}
.tool-tree .row {
    gap: 3px;
}
.tl1 {
    padding-left: 15px;
}
.tl0 {
    padding-left: 4px;
}
.tl2 {
    padding-left: 27px;
}
.tool-tree .sel {
    padding-right: 2px;
    gap: 3px;
}
.options {
    display: flex;
    flex-direction: column;
    width: 426px;
    flex: none;
}
.listbox {
    display: flex;
    flex-direction: column;
    border: 1px solid #dcdcdc;
    flex: none;
}
.linker-flags {
    height: 113px;
}
.linker-flags .list-head {
    padding-bottom: 2px;
}
.other-objects {
    height: 126px;
    margin-top: 12px;
}
.list-head {
    display: flex;
    align-items: center;
    justify-content: space-between;
    height: 20px;
    padding: 0 5px 0 6px;
    flex: none;
}
.list-tools {
    display: flex;
    gap: 5px;
}
.list-body {
    flex: 1;
    border-top: 1px solid #a8a8a8;
    border-right: 1px solid #c4c4c4;
    border-bottom: 1px solid #c4c4c4;
}
.field {
    display: flex;
    align-items: center;
    flex: none;
}
.field label {
    width: 81px;
    flex: none;
}
.input {
    flex: 1;
    height: 17px;
    padding: 1px 0 0 4px;
    border: 1px solid #bcbcbc;
    line-height: 14px;
}
.map-field {
    margin-top: 3px;
}
.checks {
    margin-top: 2px;
}
.check {
    display: flex;
    align-items: center;
    height: 16.3px;
}
.box {
    display: block;
    position: relative;
    width: 9px;
    height: 9px;
    margin-right: 3px;
    border: 1px solid #555;
    background-color: #fff;
    flex: none;
}
.box.on::after {
    content: "";
    position: absolute;
    left: 2px;
    top: -1px;
    width: 3px;
    height: 6px;
    border-right: 1px solid #333;
    border-bottom: 1px solid #333;
    transform: rotate(40deg);
}
.flags-field {
    margin-top: 1px;
}
.page-buttons {
    display: flex;
    justify-content: flex-end;
    gap: 6px;
    padding: 5px 1px 0 0;
    flex: none;
}
.restore {
    width: 78px;
}
.apply {
    width: 66px;
}
.dlg-foot {
    display: flex;
    align-items: center;
    justify-content: flex-end;
    flex: 1;
    padding: 0 6px 0 0;
    border-top: 1px solid #b8b8b8;
    gap: 6px;
}
.help {
    width: 16px;
    height: 16px;
    margin: 0 auto 0 11px;
    border: 1.5px solid #555;
    border-radius: 50%;
    color: #444;
    font: bold 10px/13px "Liberation Sans", sans-serif;
    text-align: center;
}
.primary {
    width: 77px;
    background-color: #e6eef8;
    border: 1.5px solid #2f7fd6;
}
.cancel {
    width: 76px;
    background-color: #e1e1e1;
}

/* annotations */
.mark {
    position: absolute;
    display: block;
    border: 2px solid #e8333a;
}
.mark-toolbar { left: 74px; top: 13px; width: 39px; height: 40px; }
.mark-settings { left: 264px; top: 157px; width: 85px; height: 24px; }
.mark-tab { left: 399px; top: 149px; width: 79px; height: 28px; }
.mark-misc { left: 422px; top: 449px; width: 106px; height: 15px; }
.mark-check { left: 618px; top: 569px; width: 180px; height: 24px; }
.arrow {
    position: absolute;
    left: 0;
    top: 0;
}
.watermark {
    position: absolute;
    left: 925px;
    top: 675px;
    width: 155px;
    height: 45px;
    color: rgba(255, 255, 255, 0.6);
    text-shadow: 0 0 1px rgba(150, 150, 150, 0.6);
}
.wm-21 {
    position: absolute;
    left: 1px;
    top: -1px;
    font: bold 38px/42px "Liberation Sans", sans-serif;
}
.wm-cn {
    position: absolute;
    left: 75px;
    top: 1px;
    font: bold 22px/26px "Noto Sans CJK SC", sans-serif;
}
.wm-com {
    position: absolute;
    left: 76px;
    top: 20px;
    font: italic bold 20px/22px "Liberation Sans", sans-serif;
}
```
